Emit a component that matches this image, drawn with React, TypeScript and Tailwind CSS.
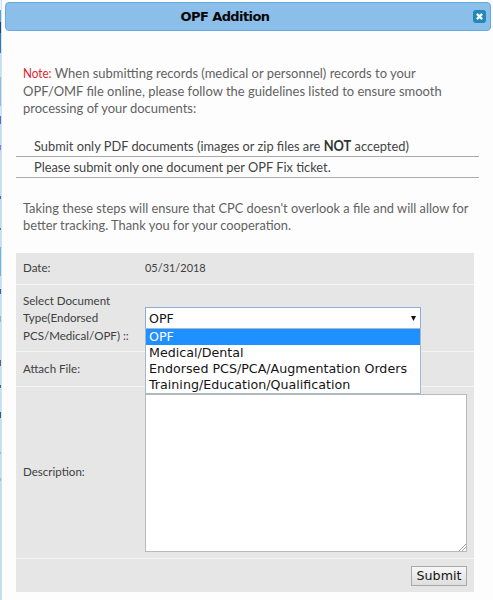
import React from "react";

const edge: [string, string][] = [
  ["h-[10px]", "bg-[#e8f3f9]"],
  ["h-[12px]", "bg-[#5f9fd0]"],
  ["h-[11px]", "bg-[#263f73]"],
  ["h-[20px]", "bg-[#3c74b4]"],
  ["h-[24px]", "bg-[#c5e0f2]"],
  ["h-[29px]", "bg-[#8dbce0]"],
  ["h-[10px]", "bg-[#d0e5f3]"],
  ["h-[8px]", "bg-[#6165c5]"],
  ["h-[21px]", "bg-[#c6daf0]"],
  ["h-[5px]", "bg-[#9277d8]"],
  ["h-[46px]", "bg-[#c3daf0]"],
  ["h-[3px]", "bg-[#6757bd]"],
  ["h-[29px]", "bg-[#c2daf0]"],
  ["h-[2px]", "bg-[#5879ac]"],
  ["h-[17px]", "bg-[#c5dff0]"],
  ["h-[29px]", "bg-[#79b1dc]"],
  ["h-[13px]", "bg-[#c4e0ef]"],
  ["h-[5px]", "bg-[#32639e]"],
  ["h-[22px]", "bg-[#c4dfed]"],
  ["h-[6px]", "bg-[#9cb4c8]"],
  ["h-[38px]", "bg-[#c4dfed]"],
  ["h-[6px]", "bg-[#695d79]"],
  ["h-[19px]", "bg-[#c4dfed]"],
  ["h-[3px]", "bg-[#526382]"],
  ["h-[24px]", "bg-[#c4dfed]"],
  ["h-[6px]", "bg-[#2e5e98]"],
  ["h-[34px]", "bg-[#c0dced]"],
  ["h-[2px]", "bg-[#9ebbd3]"],
  ["h-[24px]", "bg-[#c0dced]"],
  ["h-[3px]", "bg-[#9ebbd3]"],
  ["h-[119px]", "bg-[#bfdcec]"],
];

const options = ["OPF", "Medical/Dental", "Endorsed PCS/PCA/Augmentation Orders", "Training/Education/Qualification"];

export default function App() {
  return (
    <div className="flex h-[600px] w-[493px] overflow-hidden bg-[#fdfdfd] font-['Lato',sans-serif] whitespace-nowrap text-[#404040]">
      <div className="flex w-[2px] shrink-0 flex-col border-r border-[#cfe4f1]">
        {edge.map(([h, c], i) => (
          <div key={i} className={`w-full shrink-0 ${h} ${c}`} />
        ))}
      </div>
      <div className="min-w-0 flex-1 pt-[2px]">
        <header className="ml-[3px] flex h-[29px] w-[486px] items-center rounded-[4px] border border-[#65aae1] bg-[#8bbee8] pr-[4px]">
          <h1 className="w-[438px] text-center font-['DejaVu_Sans',sans-serif] text-[13px] leading-[18px] font-bold tracking-[-0.6px] text-[#080808]">OPF Addition</h1>
          <button className="ml-auto flex size-[13px] items-center justify-center rounded-[3px] bg-[#2388b8]" aria-label="Close">
            <svg viewBox="0 0 8 8" className="size-[7px]" fill="none" stroke="#fff" strokeWidth="2.6">
              <path d="M1 1 L7 7 M7 1 L1 7" />
            </svg>
          </button>
        </header>

        <main className="ml-[14px]">
          <section className="mt-[33px] w-[440px] origin-left scale-x-[0.914] text-[14.2px] leading-[17px] text-[#626262] ml-[7px]">
            <p><span className="text-[12.8px] text-[#df2430]">Note:</span> When submitting records (medical or personnel) records to your</p>
            <p>OPF/OMF file online, please follow the guidelines listed to ensure smooth</p>
            <p>processing of your documents:</p>
          </section>

          <ul className="mt-[20px] w-[463px] text-[14.2px] leading-[20px] text-[#444]">
            <li className="h-[21px] border-b border-[#aaa] pl-[18px]">
              <div className="origin-left scale-x-[0.904]">Submit only PDF documents (images or zip files are <b className="text-[#333]">NOT</b> accepted)</div>
            </li>
            <li className="h-[21px] border-b border-[#aaa] pl-[18px]">
              <div className="origin-left scale-x-[0.904]">Please submit only one document per OPF Fix ticket.</div>
            </li>
          </ul>

          <section className="mt-[21px] ml-[7px] w-[440px] origin-left scale-x-[0.904] text-[14.2px] leading-[17px] text-[#626262]">
            <p>Taking these steps will ensure that CPC doesn't overlook a file and will allow for</p>
            <p>better tracking. Thank you for your cooperation.</p>
          </section>

          <form className="mt-[20px] w-[458px] text-[12.3px]">
            <div className="flex h-[31px] items-center bg-[#e6e6e6] pl-[7px]">
              <span className="w-[122px] origin-left scale-x-[0.94]">Date:</span>
              <span className="origin-left scale-x-[0.89]">05/31/2018</span>
            </div>
            <div className="flex h-[68px] items-center border-y border-[#f5f5f5] bg-[#e6e6e6] pl-[7px]">
              <label className="w-[122px] origin-left scale-x-[0.94] leading-[17.5px]">Select Document<br />Type(Endorsed<br />PCS/Medical/OPF) ::</label>
              <div className="relative h-[22px] w-[276px] font-['DejaVu_Sans',sans-serif] text-[12.67px] text-[#151515]">
                <div className="flex h-[22px] items-center justify-between border border-[#8eabdc] bg-white pr-[4px] pl-[3px]">
                  <span>OPF</span>
                  <svg viewBox="0 0 5 5" className="size-[5px]"><path d="M0 0 H5 L2.5 5 Z" fill="#111" /></svg>
                </div>
                <ul className="absolute top-[21px] left-0 z-10 w-[276px] border border-[#a9b7ca] bg-white leading-[16px]">
                  {options.map((o, i) => (
                    <li key={o} className={i === 0 ? "h-[16px] bg-[#1f90ff] pl-[3px] text-white" : "h-[16px] pl-[3px]"}>{o}</li>
                  ))}
                </ul>
              </div>
            </div>
            <div className="flex h-[35px] items-center border-b border-[#f5f5f5] bg-[#e6e6e6] pl-[7px]">
              <span className="origin-left scale-x-[0.94]">Attach File:</span>
            </div>
            <div className="flex h-[172px] items-center border-b border-[#f5f5f5] bg-[#e6e6e6] pl-[7px]">
              <label className="w-[122px] origin-left scale-x-[0.94]">Description:</label>
              <div className="flex h-[158px] w-[322px] items-end justify-end border border-[#b9b9b9] bg-white">
                <svg viewBox="0 0 7 7" className="size-[7px]" stroke="#909090" strokeWidth=".8"><path d="M0 7 L7 0 M3 7 L7 3" /></svg>
              </div>
            </div>
            <div className="flex h-[33px] items-center justify-end bg-[#e6e6e6] pr-[7px]">
              <button type="button" className="h-[20px] w-[56px] border border-[#a9a9a9] bg-gradient-to-b from-[#f7f7f7] to-[#dedede] font-['DejaVu_Sans',sans-serif] text-[12.67px] leading-[18px] text-[#151515]">Submit</button>
            </div>
          </form>
        </main>
      </div>
    </div>
  );
}
